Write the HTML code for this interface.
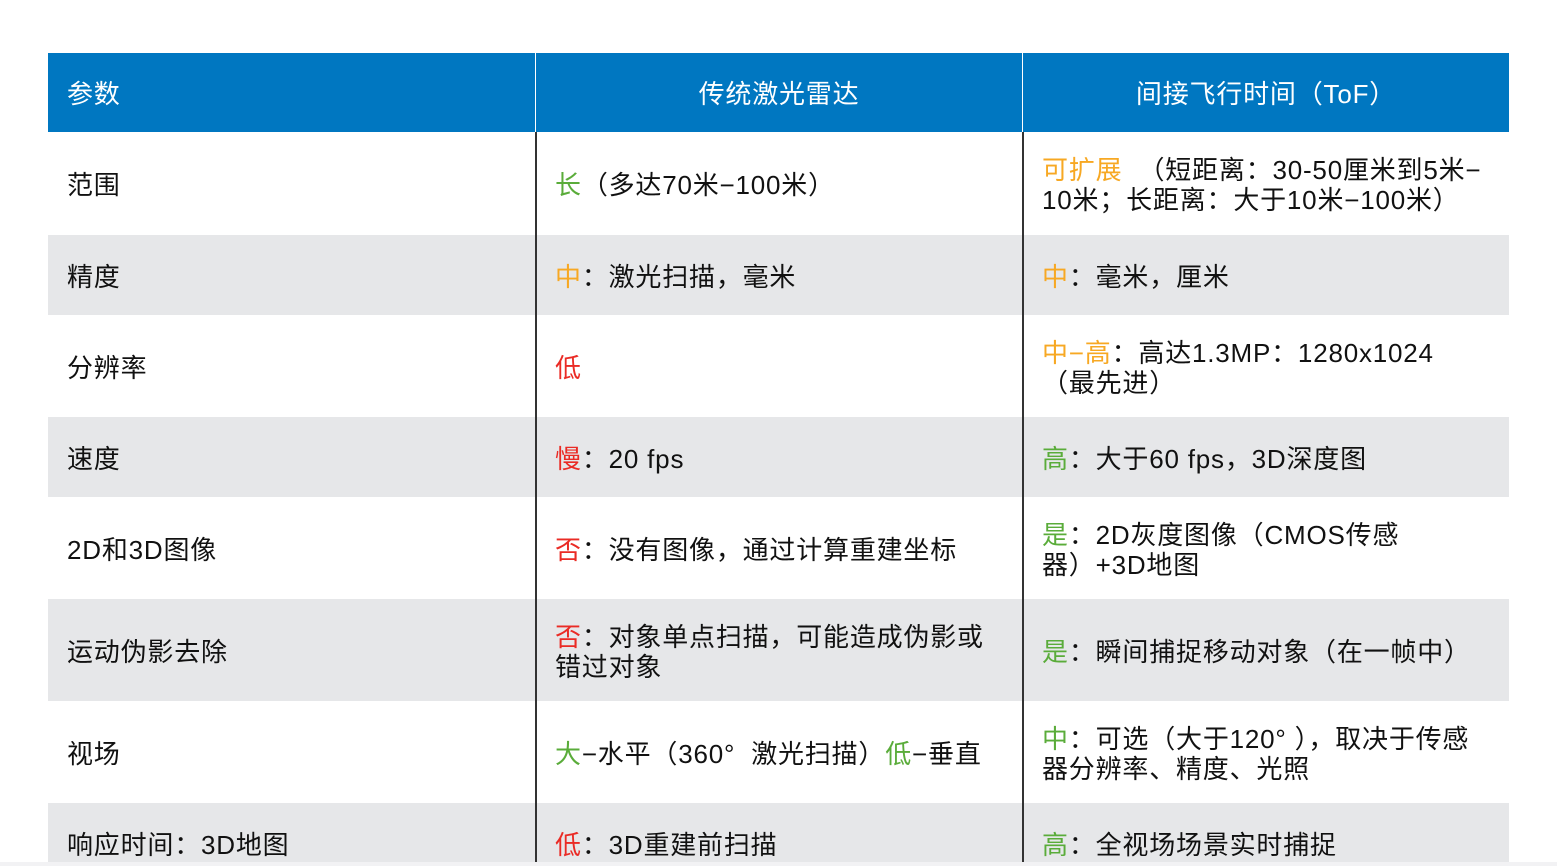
<!DOCTYPE html>
<html><head><meta charset="utf-8"><style>
body{margin:0;width:1557px;height:866px;background:#fff;position:relative;overflow:hidden;font-family:"Liberation Sans","Noto Sans CJK SC",sans-serif;color:#111;}
.row{position:absolute;left:48px;width:1461px;display:flex;}
.c{box-sizing:border-box;display:flex;align-items:center;font-size:26px;line-height:30px;letter-spacing:0.8px;font-feature-settings:"fwid";white-space:nowrap;padding-top:3px;}
.c1{width:487px;padding-left:19px;}
.c2{width:487px;padding-left:18px;border-left:2px solid #333;}
.c3{width:487px;padding-left:18px;border-left:2px solid #333;}
.hd{top:53px;height:79px;background:#0077c1;color:#fff;}
.hd .c2,.hd .c3{border-left:1px solid #fff;justify-content:center;padding:3px 0 0 0;}
.g{background:#e6e7e9;}
.gr{color:#5aac3a}.or{color:#f7a823}.rd{color:#ea2b25}
</style></head><body>
<div class="row hd"><div class="c c1">参数</div><div class="c c2">传统激光雷达</div><div class="c c3">间接飞行时间（ToF）</div></div>
<div class="row" style="top:132px;height:103px"><div class="c c1">范围</div><div class="c c2"><span><span class="gr">长</span>（多达70米−100米）</span></div><div class="c c3"><span><span class="or">可扩展</span>&nbsp;&nbsp;（短距离：30-50厘米到5米−<br>10米；长距离：大于10米−100米）</span></div></div>
<div class="row g" style="top:235px;height:80px"><div class="c c1">精度</div><div class="c c2"><span><span class="or">中</span>：激光扫描，毫米</span></div><div class="c c3"><span><span class="or">中</span>：毫米，厘米</span></div></div>
<div class="row" style="top:315px;height:102px"><div class="c c1">分辨率</div><div class="c c2"><span class="rd">低</span></div><div class="c c3"><span><span class="or">中−高</span>：高达1.3MP：1280x1024<br>（最先进）</span></div></div>
<div class="row g" style="top:417px;height:80px"><div class="c c1">速度</div><div class="c c2"><span><span class="rd">慢</span>：20 fps</span></div><div class="c c3"><span><span class="gr">高</span>：大于60 fps，3D深度图</span></div></div>
<div class="row" style="top:497px;height:102px"><div class="c c1">2D和3D图像</div><div class="c c2"><span><span class="rd">否</span>：没有图像，通过计算重建坐标</span></div><div class="c c3"><span><span class="gr">是</span>：2D灰度图像（CMOS传感<br>器）+3D地图</span></div></div>
<div class="row g" style="top:599px;height:102px"><div class="c c1">运动伪影去除</div><div class="c c2"><span><span class="rd">否</span>：对象单点扫描，可能造成伪影或<br>错过对象</span></div><div class="c c3"><span><span class="gr">是</span>：瞬间捕捉移动对象（在一帧中）</span></div></div>
<div class="row" style="top:701px;height:102px"><div class="c c1">视场</div><div class="c c2"><span><span class="gr">大</span>−水平（360°&nbsp;&nbsp;激光扫描）<span class="gr">低</span>−垂直</span></div><div class="c c3"><span><span class="gr">中</span>：可选（大于120°&nbsp;），取决于传感<br>器分辨率、精度、光照</span></div></div>
<div class="row g" style="top:803px;height:59px"><div class="c c1" style="align-items:flex-start;padding-top:27px">响应时间：3D地图</div><div class="c c2" style="align-items:flex-start;padding-top:27px"><span><span class="rd">低</span>：3D重建前扫描</span></div><div class="c c3" style="align-items:flex-start;padding-top:27px"><span><span class="gr">高</span>：全视场场景实时捕捉</span></div></div>
<div style="position:absolute;left:0;top:862px;width:1557px;height:4px;background:#f2f2f4"></div>
</body></html>
